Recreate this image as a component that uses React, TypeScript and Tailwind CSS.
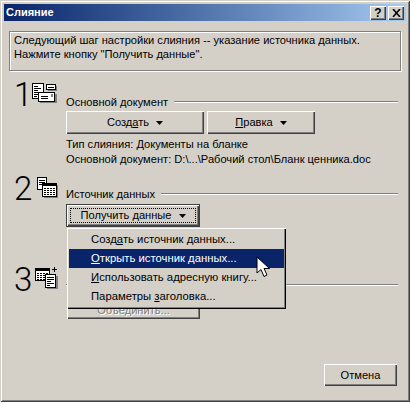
import React from "react";

const raised =
  "bg-[#d4d0c8] shadow-[inset_1px_1px_0_#ffffff,inset_-1px_-1px_0_#404040,inset_-2px_-2px_0_#808080]";

function Arrow() {
  return (
    <svg width="7" height="4" viewBox="0 0 7 4" className="ml-[7px] inline-block">
      <path d="M0 0h7L3.5 4z" fill="#000" />
    </svg>
  );
}

function SectionHead({ children, lineOnly }: { children?: React.ReactNode; lineOnly?: boolean }) {
  return (
    <div className="flex items-center gap-[6px] h-[14px]">
      {!lineOnly && <span className="whitespace-nowrap">{children}</span>}
      <div className="flex-1 h-[2px] border-t border-b border-t-[#808080] border-b-white" />
    </div>
  );
}

function StepNumber({ n }: { n: string }) {
  return (
    <div className="w-[23px] pl-[5px] text-[33px] leading-[30px] text-black font-light font-['Roboto',sans-serif]">
      {n}
    </div>
  );
}

function DocIcon() {
  return (
    <svg width="26" height="20" viewBox="0 0 26 20" shapeRendering="crispEdges">
      <rect x="8" y="11" width="17" height="9" fill="#808080" />
      <rect x="16" y="3" width="9" height="5" fill="#808080" />
      <rect x=".5" y=".5" width="11" height="15" fill="#fff" stroke="#000" />
      <path d="M2 3h4M2 5h7M2 7h4M2 9h7M2 11h4M2 13h3" stroke="#000" />
      <rect x="14.500" y="1.500" width="9" height="5" fill="#fff" stroke="#000" />
      <path d="M16 4h6" stroke="#000" />
      <rect x="6.500" y="9.500" width="16" height="9" fill="#fff" stroke="#000" />
      <path d="M9 13h7M9 15h7" stroke="#000" />
      <rect x="19" y="11" width="2" height="3" fill="#808080" />
    </svg>
  );
}

function SourceIcon() {
  return (
    <svg width="21" height="21" viewBox="0 0 21 21" shapeRendering="crispEdges">
      <rect x=".5" y=".5" width="9" height="12" fill="#fff" stroke="#000" />
      <path d="M2 3h6M2 5h6M2 7h3" stroke="#000" />
      <rect x="7" y="8" width="14" height="13" fill="#808080" />
      <rect x="5.500" y="6.500" width="14" height="13" fill="#fff" stroke="#000" />
      <rect x="5" y="6" width="15" height="3" fill="#000" />
      <path d="M7 11h11M7 13h11M7 15h11M7 17h11" stroke="#000" strokeDasharray="2 1" />
    </svg>
  );
}

function MergeIcon() {
  return (
    <svg width="23" height="22" viewBox="0 0 23 22" shapeRendering="crispEdges">
      <rect x=".5" y="1.500" width="14" height="12" fill="#fff" stroke="#000" />
      <rect x="0" y="1" width="15" height="3" fill="#000" />
      <path d="M2 6h11M2 8h11M2 10h11M2 12h9" stroke="#000" strokeDasharray="2 1" />
      <rect x="12" y="9" width="11" height="13" fill="#808080" />
      <rect x="10.500" y="7.500" width="10" height="13" fill="#fff" stroke="#000" />
      <path d="M12 10h7M12 12h7M12 14h4M12 16h7M12 18h3" stroke="#000" />
      <path d="M19.500 0v5M17 2.500h5" stroke="#000" />
    </svg>
  );
}

function MenuItem({ active, children }: { active?: boolean; children: React.ReactNode }) {
  return (
    <div className={`h-[19px] pl-[22px] leading-[19px] whitespace-nowrap text-[11.3px] ${active ? "bg-[#0a246a] text-white" : "text-black"}`}>
      {children}
    </div>
  );
}

export default function App() {
  return (
    <div className="relative w-[410px] h-[402px] overflow-hidden bg-[#d4d0c8] text-black text-[11.12px] leading-[15px] font-['Liberation_Sans',sans-serif] shadow-[inset_1px_1px_0_#d4d0c8,inset_-1px_-1px_0_#404040,inset_2px_2px_0_#ffffff,inset_-2px_-2px_0_#808080]">
      {/* title bar */}
      <div className="absolute left-[4px] right-[4px] top-[4px] h-[17px] pl-[1px] pr-[2px] flex items-center justify-between bg-gradient-to-r from-[#0a246a] to-[#a6caf0]">
        <span className="text-white font-bold text-[11px] pl-[1px]">Слияние</span>
        <div className="flex gap-[2px]">
          <div className={`w-[16px] h-[14px] flex items-center justify-center font-bold text-[12px] leading-none ${raised}`}>?</div>
          <div className={`w-[16px] h-[14px] flex items-center justify-center ${raised}`}>
            <svg width="9" height="8" viewBox="0 0 9 8">
              <path d="M1 0l7 8M8 0L1 8" stroke="#000" strokeWidth="1.6" fill="none" />
            </svg>
          </div>
        </div>
      </div>

      {/* body */}
      <div className="pt-[31px] pl-[9px] pr-[12px]">
        <div className="-mr-[3px] h-[40px] pl-[4px] pt-[1px] border border-[#808080] leading-[14px] shadow-[1px_1px_0_#ffffff,inset_1px_1px_0_#ffffff]">
          <p className="whitespace-nowrap">Следующий шаг настройки слияния -- указание источника данных.</p>
          <p className="whitespace-nowrap">Нажмите кнопку "Получить данные".</p>
        </div>

        {/* step 1 */}
        <div className="flex mt-[9px] h-[94px]">
          <div className="flex w-[57px] h-[30px]">
            <StepNumber n="1" />
            <div className="mt-[3px]"><DocIcon /></div>
          </div>
          <div className="flex-1 pt-[15px]">
            <SectionHead>Основной документ</SectionHead>
            <div className="flex gap-[3px] mt-[2px]">
              <div className={`w-[138px] h-[23px] flex items-center justify-center ${raised}`}>
                <span>Созд<u>а</u>ть</span><Arrow />
              </div>
              <div className={`w-[108px] h-[23px] flex items-center justify-center ${raised}`}>
                <span><u>П</u>равка</span><Arrow />
              </div>
            </div>
            <p className="mt-[3px] whitespace-nowrap">Тип слияния: Документы на бланке</p>
            <p className="whitespace-nowrap">Основной документ: D:\...\Рабочий стол\Бланк ценника.doc</p>
          </div>
        </div>

        {/* step 2 */}
        <div className="flex h-[91px]">
          <div className="flex w-[57px] h-[30px]">
            <StepNumber n="2" />
            <div className="mt-[3px] ml-[5px]"><SourceIcon /></div>
          </div>
          <div className="flex-1 pt-[13px]">
            <SectionHead>Источник данных</SectionHead>
            <div className={`mt-[3px] w-[134px] h-[23px] flex items-center justify-center relative border border-[#404040] ${raised}`}>
              <div className="absolute inset-[3px] border border-dotted border-black" />
              <span>Получить <u>д</u>анные</span><Arrow />
            </div>
          </div>
        </div>

        {/* step 3 */}
        <div className="flex">
          <div className="flex w-[57px] h-[30px]">
            <StepNumber n="3" />
            <div className="mt-[2px] ml-[3px]"><MergeIcon /></div>
          </div>
          <div className="flex-1 pt-[13px]">
            <SectionHead lineOnly />
            <div className={`ml-[1px] w-[133px] h-[27px] pt-[9px] flex items-center justify-center text-[#808080] [text-shadow:1px_1px_0_#ffffff] ${raised}`}>
              Объединить...
            </div>
          </div>
        </div>
      </div>

      <div className={`absolute right-[13px] bottom-[16px] w-[73px] h-[22px] flex items-center justify-center ${raised}`}>Отмена</div>

      {/* open dropdown */}
      <div className="absolute left-[67px] top-[228px] w-[219px] h-[81px] pt-[2px] px-[2px] bg-[#d4d0c8] shadow-[inset_1px_1px_0_#ffffff,inset_-1px_-1px_0_#000000,inset_-2px_-2px_0_#808080]">
        <MenuItem>Созд<u>а</u>ть источник данных...</MenuItem>
        <MenuItem active><u>О</u>ткрыть источник данных...</MenuItem>
        <MenuItem><u>И</u>спользовать адресную книгу...</MenuItem>
        <MenuItem>Параметры <u>з</u>аголовка...</MenuItem>
      </div>

      {/* mouse pointer */}
      <svg width="14" height="23" viewBox="0 0 14 23" className="absolute left-[256px] top-[256px]">
        <path d="M1 1v16l4-3.500 3 7 3-1.500-3-6.500h5.500z" fill="#fff" stroke="#000" strokeWidth="1" />
      </svg>
    </div>
  );
}
